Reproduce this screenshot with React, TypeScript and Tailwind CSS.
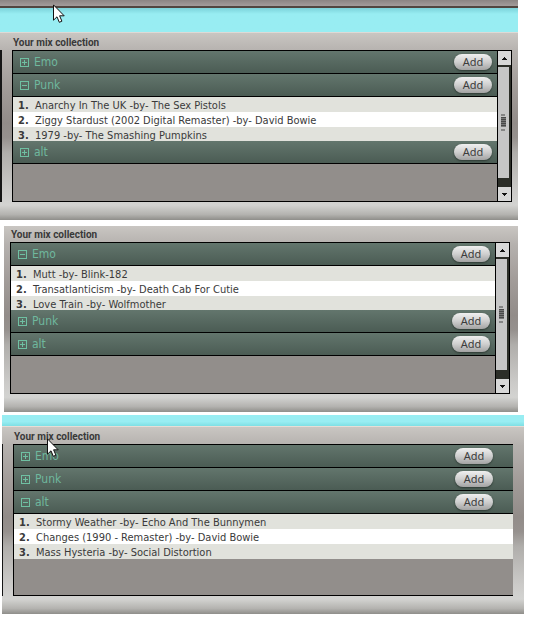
import { clsx } from "clsx";

interface Mix {
  name: string;
  open: boolean;
  songs: string[];
}

const punkOpen: Mix[] = [
  { name: "Emo", open: false, songs: [] },
  {
    name: "Punk",
    open: true,
    songs: [
      "Anarchy In The UK -by- The Sex Pistols",
      "Ziggy Stardust (2002 Digital Remaster) -by- David Bowie",
      "1979 -by- The Smashing Pumpkins",
    ],
  },
  { name: "alt", open: false, songs: [] },
];

const emoOpen: Mix[] = [
  {
    name: "Emo",
    open: true,
    songs: [
      "Mutt -by- Blink-182",
      "Transatlanticism -by- Death Cab For Cutie",
      "Love Train -by- Wolfmother",
    ],
  },
  { name: "Punk", open: false, songs: [] },
  { name: "alt", open: false, songs: [] },
];

const altOpen: Mix[] = [
  { name: "Emo", open: false, songs: [] },
  { name: "Punk", open: false, songs: [] },
  {
    name: "alt",
    open: true,
    songs: [
      "Stormy Weather -by- Echo And The Bunnymen",
      "Changes (1990 - Remaster) -by- David Bowie",
      "Mass Hysteria -by- Social Distortion",
    ],
  },
];

const metal =
  "bg-[linear-gradient(180deg,#c9c6c2_0%,#b5b1ae_10%,#a39d9a_28%,#928c89_48%,#96918e_56%,#b0aeab_64%,#cbcac8_84%,#d3d3d1_92%,#b4b3b0_97%,#8f8e8a_100%)]";

const titleText = "font-[Roboto,sans-serif] text-[10px] leading-[14px] font-bold text-[#393939]";

function ToggleIcon({ open }: { open: boolean }) {
  return (
    <svg width="9" height="9" viewBox="0 0 9 9" fill="none" stroke="#6fc0a2" shapeRendering="crispEdges" aria-hidden="true">
      <rect x="0.5" y="0.5" width="8" height="8" />
      <path d={open ? "M2 4.5h5" : "M2 4.5h5M4.5 2v5"} />
    </svg>
  );
}

function Cursor() {
  return (
    <svg width="12" height="19" viewBox="0 0 12 19" aria-hidden="true">
      <path d="M.5 .9V16.2L4 12.8L6.3 18.3L8.9 17.2L6.6 11.8H11.2Z" fill="#fff" stroke="#111" strokeLinejoin="round" />
    </svg>
  );
}

function Scrollbar() {
  return (
    <div className="flex w-[14px] shrink-0 flex-col border-l border-black bg-[#2c2e28]" aria-hidden="true">
      <div className="flex h-[14px] items-center justify-center bg-[#d8d8d8]">
        <svg width="5" height="3" viewBox="0 0 5 3" shapeRendering="crispEdges">
          <path d="M2 0h1v1h1v1h1v1H0V2h1V1h1z" fill="#111" />
        </svg>
      </div>
      <div className="mt-0.5 mr-0.5 flex flex-1 items-center justify-center bg-[#c6c6c6]">
        <svg width="5" height="17" viewBox="0 0 5 17" shapeRendering="crispEdges">
          <path d="M0 0h4v2H0zM0 15h4v2H0z" fill="#858585" />
          <path d="M0 3h5v10H0z" fill="#777" />
          <path d="M0 3.5h5M0 5.5h5M0 7.5h5M0 9.5h5M0 11.5h5" stroke="#484848" />
        </svg>
      </div>
      <div className="mt-[9px] flex h-[14px] items-center justify-center bg-[#d8d8d8]">
        <svg width="5" height="3" viewBox="0 0 5 3" shapeRendering="crispEdges">
          <path d="M0 0h5v1H4v1H3v1H2V2H1V1H0z" fill="#111" />
        </svg>
      </div>
    </div>
  );
}

function MixRow({ mix, scroll }: { mix: Mix; scroll: boolean }) {
  return (
    <li>
      <div
        className={clsx(
          "flex h-[23px] items-center justify-between border-b border-black bg-linear-to-b from-[#63766d] to-[#4b5c54] pl-[7px]",
          scroll ? "pr-[5px]" : "pr-5"
        )}
      >
        <button type="button" aria-expanded={mix.open} className="flex items-center gap-[5px] text-[12px] leading-4 text-[#6fb89e]">
          <ToggleIcon open={mix.open} />
          {mix.name}
        </button>
        <button
          type="button"
          className="h-4 w-[38px] rounded-full bg-linear-to-b from-[#f0f0f0] via-[#cfcfcf] to-[#a3a3a3] font-['Noto_Sans',sans-serif] text-[11px] leading-4 text-[#3c3c3c] shadow-[0_1px_2px_#2d3933]"
        >
          Add
        </button>
      </div>
      {mix.open && (
        <ol className={clsx("overflow-hidden", scroll && "h-[44px]")}>
          {mix.songs.map((song, i) => (
            <li key={song} className="flex h-[15px] bg-[#e1e2dc] pl-[5px] text-[11px] leading-[17px] whitespace-nowrap text-[#3a3a3a] even:bg-white">
              <span className="w-[17px] font-bold">{i + 1}.</span>
              {song}
            </li>
          ))}
        </ol>
      )}
    </li>
  );
}

function MixList({ mixes, scroll }: { mixes: Mix[]; scroll: boolean }) {
  return (
    <div className={clsx("flex h-[152px] flex-1 border-y border-l border-black bg-[#928e8b]", scroll && "border-r")}>
      <ul className="min-w-0 flex-1">
        {mixes.map((mix) => (
          <MixRow key={mix.name} mix={mix} scroll={scroll} />
        ))}
      </ul>
      {scroll && <Scrollbar />}
    </div>
  );
}

export default function App() {
  return (
    <main className="relative min-h-screen bg-white font-['DejaVu_Sans_Condensed','DejaVu_Sans',sans-serif]">
      {/* Punk expanded */}
      <section className="mr-[22px]">
        <div className="h-2 border-b-2 border-[#514640] bg-linear-to-b from-[#8b8583] to-[#a39c9b]" />
        <div className="h-6 bg-linear-to-b from-[#7cd3da] via-[#98edf2] via-25% to-[#98edf2]" />
        <div className={clsx("border-t border-[#dedad6] pt-[3px] pb-[18px]", metal)}>
          <h2 className={clsx("pl-[13px]", titleText)}>Your mix collection</h2>
          <div className="flex pr-[6px]">
            <div className="mr-[10px] w-0.5 bg-[#161616]" />
            <MixList mixes={punkOpen} scroll />
          </div>
        </div>
      </section>

      {/* Emo expanded */}
      <section className={clsx("mt-[6px] mr-[22px] ml-1 pt-[2px] pb-[18px]", metal)}>
        <h2 className={clsx("pl-[7px]", titleText)}>Your mix collection</h2>
        <div className="flex pr-2 pl-[6px]">
          <MixList mixes={emoOpen} scroll />
        </div>
      </section>

      {/* alt expanded */}
      <section className="mt-[3px] mr-4 ml-0.5">
        <div className="h-[11px] bg-linear-to-b from-[#98edf2] from-60% to-[#7edfe4]" />
        <div className={clsx("border-t border-[#e6ddd6] pt-[3px] pb-[18px]", metal)}>
          <h2 className={clsx("pl-3", titleText)}>Your mix collection</h2>
          <div className="flex pr-[11px]">
            <div className="mr-[10px] w-px bg-[#161616]" />
            <MixList mixes={altOpen} scroll={false} />
          </div>
        </div>
      </section>

      <div className="pointer-events-none absolute top-1 left-[53px]">
        <Cursor />
      </div>
      <div className="pointer-events-none absolute top-[438px] left-[47px]">
        <Cursor />
      </div>
    </main>
  );
}
